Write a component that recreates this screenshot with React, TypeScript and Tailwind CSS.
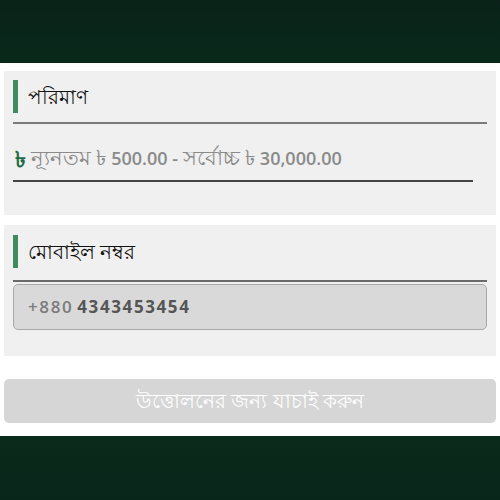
import React from "react";

const SectionTitle = ({ label }: { label: string }) => (
  <div className="flex items-center h-[33px]">
    <div className="w-[5px] h-[33px] bg-[#3f8a5f]" />
    <span className="ml-[10px] text-[20px] text-[#111] leading-none">{label}</span>
  </div>
);

export default function App() {
  return (
    <div className="w-[500px] h-[500px] bg-white flex flex-col font-['Noto_Sans','Liberation_Sans',sans-serif] overflow-hidden">
      {/* Top band */}
      <div className="h-[63px] shrink-0 bg-gradient-to-b from-[#0a2219] to-[#08291a]" />

      {/* Amount card */}
      <div className="mt-[8px] mx-[4px] h-[144px] bg-[#f0f0f0] pl-[9px] pr-[9px] pt-[9px]">
        <SectionTitle label="পরিমাণ" />
        <div className="mt-[9px] h-[2px] bg-[#7a7a7a]" />
        <div className="mr-[14px] mt-[23px] flex items-center h-[22px] text-[18px] text-[#8a8a8a] font-['Open_Sans','Noto_Sans',sans-serif] whitespace-nowrap">
          <span className="ml-[2px] text-[22px] text-[#1f6b45] font-bold">৳</span>
          <span className="ml-[5px]">
            <span className="text-[21px]">ন্যূনতম ৳</span> <b className="font-semibold">500.00 -</b>{" "}
            <span className="text-[21px]">সর্বোচ্চ ৳</span> <b className="font-semibold">30,000.00</b>
          </span>
        </div>
        <div className="mr-[14px] mt-[11px] h-[2px] bg-[#444]" />
      </div>

      {/* Mobile card */}
      <div className="mt-[10px] mx-[4px] h-[131px] bg-[#f0f0f0] px-[9px] pt-[10px]">
        <SectionTitle label="মোবাইল নম্বর" />
        <div className="mt-[12px] h-[2px] bg-[#6a6a6a]" />
        <div className="mt-[2px] h-[46px] rounded-[5px] border border-[#a8a8a8] bg-[#d9d9d9] flex items-center pl-[14px] text-[17px] font-['Open_Sans',sans-serif] font-bold tracking-[1.6px]">
          <span className="text-[#7b7b7b] font-semibold">+880</span>
          <span className="ml-[4px] text-[#555]">4343453454</span>
        </div>
      </div>

      {/* Submit button */}
      <button className="mt-[23px] mx-[4px] h-[44px] rounded-[5px] bg-[#d6d6d6] text-white text-[20px] flex items-center justify-center">
        উত্তোলনের জন্য যাচাই করুন
      </button>

      {/* Bottom band */}
      <div className="mt-[13px] flex-1 bg-gradient-to-b from-[#0a2a1a] to-[#09261a]" />
    </div>
  );
}
